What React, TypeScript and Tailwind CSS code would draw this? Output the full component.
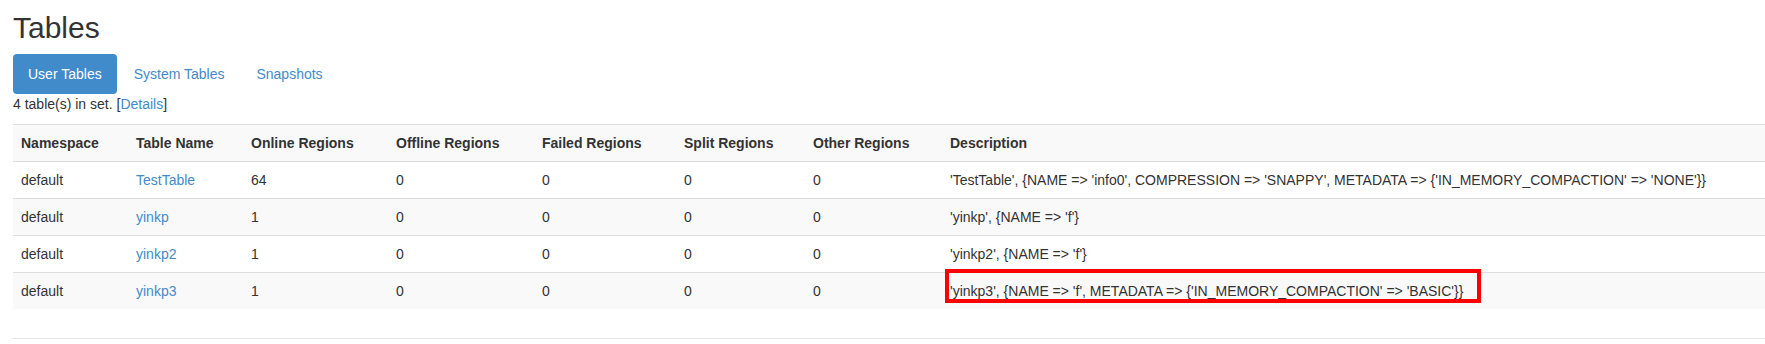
import React from 'react';

interface TableRow {
  namespace: string;
  name: string;
  online: number;
  offline: number;
  failed: number;
  split: number;
  other: number;
  description: string;
}

const rows: TableRow[] = [
  {
    namespace: 'default',
    name: 'TestTable',
    online: 64,
    offline: 0,
    failed: 0,
    split: 0,
    other: 0,
    description:
      "'TestTable', {NAME => 'info0', COMPRESSION => 'SNAPPY', METADATA => {'IN_MEMORY_COMPACTION' => 'NONE'}}",
  },
  {
    namespace: 'default',
    name: 'yinkp',
    online: 1,
    offline: 0,
    failed: 0,
    split: 0,
    other: 0,
    description: "'yinkp', {NAME => 'f'}",
  },
  {
    namespace: 'default',
    name: 'yinkp2',
    online: 1,
    offline: 0,
    failed: 0,
    split: 0,
    other: 0,
    description: "'yinkp2', {NAME => 'f'}",
  },
  {
    namespace: 'default',
    name: 'yinkp3',
    online: 1,
    offline: 0,
    failed: 0,
    split: 0,
    other: 0,
    description: "'yinkp3', {NAME => 'f', METADATA => {'IN_MEMORY_COMPACTION' => 'BASIC'}}",
  },
];

const headers = [
  'Namespace',
  'Table Name',
  'Online Regions',
  'Offline Regions',
  'Failed Regions',
  'Split Regions',
  'Other Regions',
  'Description',
];

const colWidths = ['w-[115px]', 'w-[115px]', 'w-[145px]', 'w-[146px]', 'w-[142px]', 'w-[129px]', 'w-[137px]', 'w-auto'];

function App() {
  return (
    <div className="relative w-[1765px] h-[344px] overflow-hidden bg-white text-[14px] leading-5 text-[#333] font-['Liberation_Sans',Arial,sans-serif]">
      <div className="pl-[13px]">
        <h1 className="pt-[11px] text-[30px] leading-[33px] font-normal">Tables</h1>

        <ul className="mt-[10px] flex">
          <li className="rounded-[4px] bg-[#428bca] px-[15px] py-[10px] text-white">User Tables</li>
          <li className="ml-[2px] px-[15px] py-[10px] text-[#428bca]">System Tables</li>
          <li className="ml-[2px] px-[15px] py-[10px] text-[#428bca]">Snapshots</li>
        </ul>

        <p>
          4 table(s) in set. [<a className="text-[#428bca]">Details</a>]
        </p>

        <table className="mt-[10px] w-[1752px] table-fixed border-collapse">
          <colgroup>
            {colWidths.map((w, i) => (
              <col key={i} className={w} />
            ))}
          </colgroup>
          <tbody>
            <tr className="bg-[#f9f9f9]">
              {headers.map((h) => (
                <th key={h} className="border-t border-[#ddd] p-2 text-left font-bold">
                  {h}
                </th>
              ))}
            </tr>
            {rows.map((r, i) => (
              <tr key={r.name} className={i % 2 === 1 ? 'bg-[#f9f9f9]' : 'bg-white'}>
                <td className="border-t border-[#ddd] p-2">{r.namespace}</td>
                <td className="border-t border-[#ddd] p-2">
                  <a className="text-[#428bca]">{r.name}</a>
                </td>
                <td className="border-t border-[#ddd] p-2">{r.online}</td>
                <td className="border-t border-[#ddd] p-2">{r.offline}</td>
                <td className="border-t border-[#ddd] p-2">{r.failed}</td>
                <td className="border-t border-[#ddd] p-2">{r.split}</td>
                <td className="border-t border-[#ddd] p-2">{r.other}</td>
                <td className="border-t border-[#ddd] p-2 whitespace-nowrap">{r.description}</td>
              </tr>
            ))}
          </tbody>
        </table>

        <hr className="mt-[29px] border-t border-[#e5e5e5]" />
      </div>

      {/* highlight drawn over the last description */}
      <div className="absolute left-[945px] top-[269px] h-[34px] w-[536px] border-4 border-[#ff0000]" />
    </div>
  );
}

export default App;
